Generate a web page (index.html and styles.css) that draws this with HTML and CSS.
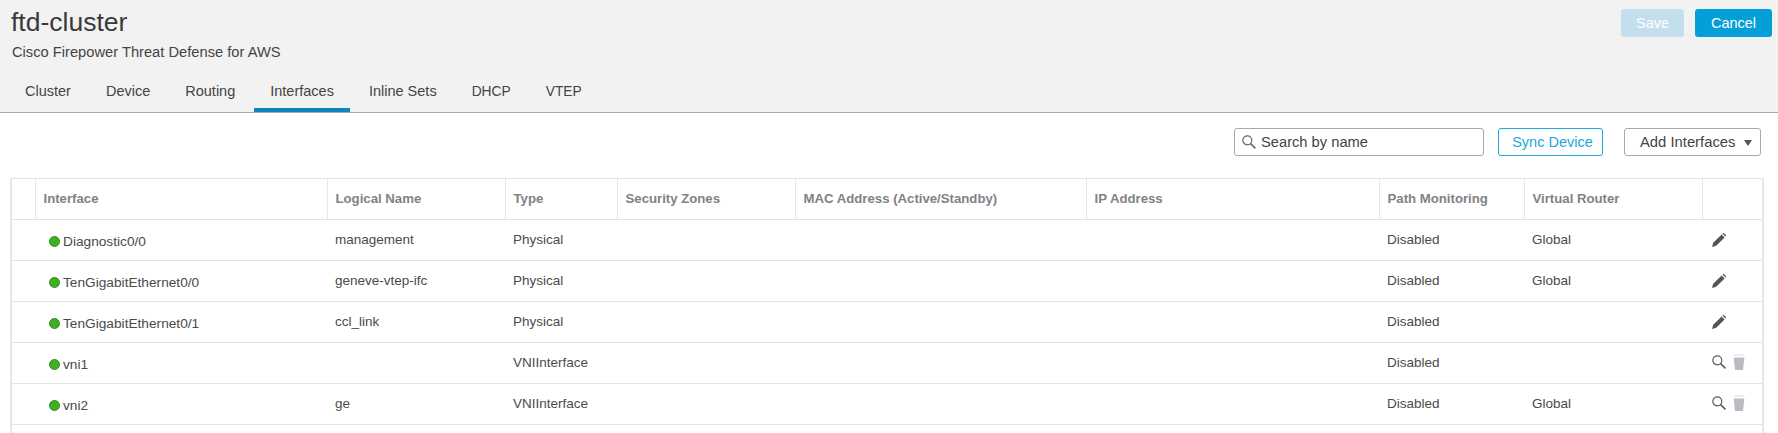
FILE: index.html
```html
<!DOCTYPE html>
<html lang="en">
<head>
    <meta charset="UTF-8">
    <title>ftd-cluster - Interfaces</title>
    <link rel="stylesheet" href="styles.css">
</head>
<body>
    <svg class="sprites" width="0" height="0">
        <symbol id="pencil" viewBox="0 0 14 14">
            <path d="M0 14l1.2-4.2L9.6 1.4l3 3L4.2 12.8z"/>
            <path d="M10.4.6l.4-.4c.4-.3.9-.3 1.2 0l1.8 1.8c.3.3.3.8 0 1.200l-.4.4z"/>
        </symbol>
        <symbol id="search" viewBox="0 0 14 14">
            <circle cx="5.300" cy="5.300" r="4.500" fill="none" stroke="currentColor" stroke-width="1.200"/>
            <path d="M8.600 8.600L13.400 13.400" fill="none" stroke="currentColor" stroke-width="1.500"/>
        </symbol>
        <symbol id="trash" viewBox="0 0 12 16">
            <path d="M1 .8Q6-.4 11 .8v.9Q6 .6 1 1.700z" opacity=".55"/>
            <path d="M.6 3.500h10.800L10 16H2z"/>
        </symbol>
    </svg>

    <header class="top">
        <div class="top-row">
            <div>
                <h1>ftd-cluster</h1>
                <p class="subtitle">Cisco Firepower Threat Defense for AWS</p>
            </div>
            <div class="actions">
                <button class="btn-save" disabled>Save</button>
                <button class="btn-cancel">Cancel</button>
            </div>
        </div>
        <nav class="tabs">
            <a href="#">Cluster</a>
            <a href="#">Device</a>
            <a href="#">Routing</a>
            <a href="#" class="active">Interfaces</a>
            <a href="#">Inline Sets</a>
            <a href="#" class="caps">DHCP</a>
            <a href="#" class="caps">VTEP</a>
        </nav>
    </header>

    <div class="toolbar">
        <label class="search">
            <svg class="icon-search"><use href="#search"/></svg>
            <input type="text" placeholder="Search by name">
        </label>
        <button class="btn-sync">Sync Device</button>
        <button class="btn-add">Add Interfaces <span class="caret"></span></button>
    </div>

    <div class="table-wrap">
        <table>
            <colgroup>
                <col class="c-check"><col class="c-iface"><col class="c-logical"><col class="c-type"><col class="c-zones">
                <col class="c-mac"><col class="c-ip"><col class="c-path"><col class="c-router"><col class="c-tools">
            </colgroup>
            <thead>
                <tr>
                    <th></th>
                    <th>Interface</th>
                    <th>Logical Name</th>
                    <th>Type</th>
                    <th>Security Zones</th>
                    <th>MAC Address (Active/Standby)</th>
                    <th>IP Address</th>
                    <th>Path Monitoring</th>
                    <th>Virtual Router</th>
                    <th></th>
                </tr>
            </thead>
            <tbody>
                <tr>
                    <td></td>
                    <td class="name"><span class="dot"></span>Diagnostic0/0</td>
                    <td>management</td>
                    <td>Physical</td>
                    <td></td><td></td><td></td>
                    <td>Disabled</td>
                    <td>Global</td>
                    <td class="tools"><svg class="icon-pencil"><use href="#pencil"/></svg></td>
                </tr>
                <tr>
                    <td></td>
                    <td class="name"><span class="dot"></span>TenGigabitEthernet0/0</td>
                    <td>geneve-vtep-ifc</td>
                    <td>Physical</td>
                    <td></td><td></td><td></td>
                    <td>Disabled</td>
                    <td>Global</td>
                    <td class="tools"><svg class="icon-pencil"><use href="#pencil"/></svg></td>
                </tr>
                <tr>
                    <td></td>
                    <td class="name"><span class="dot"></span>TenGigabitEthernet0/1</td>
                    <td>ccl_link</td>
                    <td>Physical</td>
                    <td></td><td></td><td></td>
                    <td>Disabled</td>
                    <td></td>
                    <td class="tools"><svg class="icon-pencil"><use href="#pencil"/></svg></td>
                </tr>
                <tr>
                    <td></td>
                    <td class="name"><span class="dot"></span>vni1</td>
                    <td></td>
                    <td>VNIInterface</td>
                    <td></td><td></td><td></td>
                    <td>Disabled</td>
                    <td></td>
                    <td class="tools"><svg class="icon-search"><use href="#search"/></svg><svg class="icon-trash"><use href="#trash"/></svg></td>
                </tr>
                <tr>
                    <td></td>
                    <td class="name"><span class="dot"></span>vni2</td>
                    <td>ge</td>
                    <td>VNIInterface</td>
                    <td></td><td></td><td></td>
                    <td>Disabled</td>
                    <td>Global</td>
                    <td class="tools"><svg class="icon-search"><use href="#search"/></svg><svg class="icon-trash"><use href="#trash"/></svg></td>
                </tr>
            </tbody>
        </table>
    </div>
</body>
</html>
```

FILE: styles.css
```css
html, body { height: 100%; }
body { font-family: "Liberation Sans", Arial, sans-serif; font-size: 14.5px; color: #4a4a4a; margin: 0; padding: 0; background-color: #fff; display: flex; flex-direction: column; overflow: hidden; }
button { font-family: inherit; font-size: 14.5px; border-radius: 3px; cursor: pointer; }
.sprites { position: absolute; }

.top { background-color: #f2f2f2; border-bottom: 1px solid #aaa; height: 112px; flex: none; display: flex; flex-direction: column; justify-content: space-between; }
.top-row { display: flex; justify-content: space-between; padding: 9px 6px 0 11px; }
h1 { margin: 0; font-size: 26.5px; font-weight: normal; line-height: 26px; color: #3a3a3a; }
.subtitle { margin: 9px 0 0 1px; font-size: 14.7px; line-height: 16px; color: #444; }
.actions { display: flex; gap: 11px; }
.btn-save, .btn-cancel { height: 28px; padding: 0; border: none; color: #fff; }
.btn-save { width: 63px; background-color: #c3dfee; }
.btn-cancel { width: 77px; background-color: #049fd9; }

.tabs { display: flex; gap: 3px; padding-left: 9px; }
.tabs a { color: #444; text-decoration: none; padding: 0 16px; height: 37px; line-height: 33px; box-sizing: border-box; }
.tabs a.active { border-bottom: 4px solid #0a86b8; }
.tabs a.caps { font-size: 13.8px; }

.toolbar { display: flex; justify-content: flex-end; align-items: center; gap: 14px; padding: 15px 17px 22px 0; flex: none; }
.search { display: flex; align-items: center; gap: 5px; width: 250px; height: 28px; box-sizing: border-box; border: 1px solid #aaa; border-radius: 3px; padding-left: 7px; }
.search input { border: none; outline: none; flex: 1; min-width: 0; padding: 0; font-family: inherit; font-size: 14.7px; color: #444; }
.search input::placeholder { color: #444; opacity: 1; }
.search .icon-search { color: #666; }
.btn-sync, .btn-add { height: 28px; background-color: #fff; }
.btn-sync { width: 105px; padding: 0 0 0 4px; border: 1px solid #1ba8dd; color: #1ba8dd; }
.btn-add { width: 137px; margin-left: 7px; padding: 0 0 0 15px; text-align: left; font-size: 14.8px; border: 1px solid #aaa; color: #444; }
.caret { display: inline-block; margin-left: 4px; vertical-align: 1px; border-left: 4px solid transparent; border-right: 4px solid transparent; border-top: 6px solid #555; }

.table-wrap { flex: 1; margin: 0 14px 0 10px; border-left: 2px solid #e6e6e6; border-right: 2px solid #e6e6e6; }
table { width: 100%; border-collapse: collapse; table-layout: fixed; }
.c-check { width: 23px; }
.c-iface { width: 292px; }
.c-logical { width: 178px; }
.c-type { width: 112px; }
.c-zones { width: 178px; }
.c-mac { width: 291px; }
.c-ip { width: 293px; }
.c-path { width: 145px; }
.c-router { width: 178px; }
th { height: 41px; padding: 0 8px 2px; box-sizing: border-box; text-align: left; font-size: 13.2px; font-weight: bold; color: #808285; border-top: 1px solid #e3e3e3; border-bottom: 1px solid #e3e3e3; border-left: 1px solid #e6e6e6; }
th:first-child { border-left: none; }
td { height: 41px; padding: 0 8px 2px; box-sizing: border-box; font-size: 13.5px; border-bottom: 1px solid #e3e3e3; white-space: nowrap; }
td.name { padding: 3px 0 0 14px; font-size: 13.7px; }
td.tools { padding: 0 0 2px 10px; }
.dot { display: inline-block; width: 9px; height: 9px; margin-right: 3px; vertical-align: -1px; border-radius: 50%; background-color: #3fb120; border: 1px solid #3c8a2a; }
.icon-pencil { width: 14px; height: 14px; fill: #555; vertical-align: middle; }
.icon-search { width: 14px; height: 14px; color: #5a5a5a; vertical-align: middle; flex: none; }
.icon-trash { width: 12px; height: 16px; fill: #b9bcc0; margin-left: 7px; vertical-align: middle; }
```
